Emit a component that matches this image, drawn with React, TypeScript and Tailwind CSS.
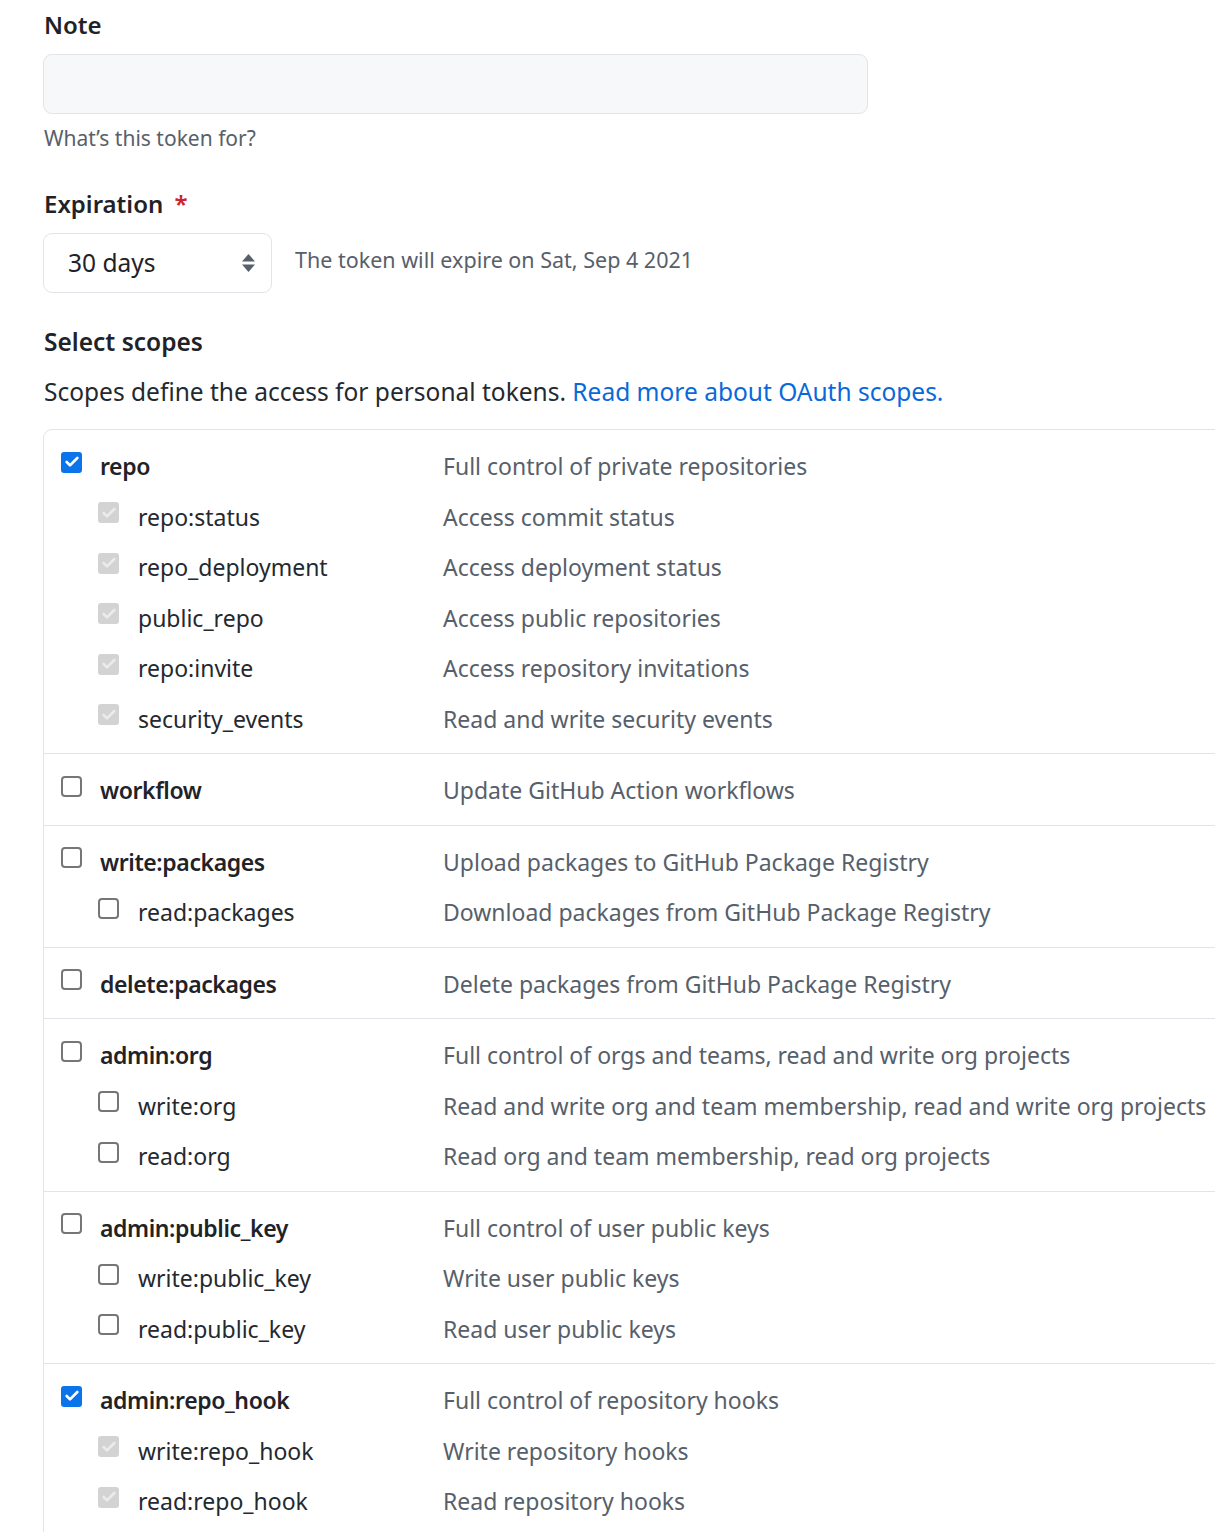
import { Check } from 'lucide-react';

type Scope = {
  name: string;
  desc: string;
  checked?: boolean;
  children?: { name: string; desc: string }[];
};

const scopes: Scope[] = [
  {
    name: 'repo',
    desc: 'Full control of private repositories',
    checked: true,
    children: [
      { name: 'repo:status', desc: 'Access commit status' },
      { name: 'repo_deployment', desc: 'Access deployment status' },
      { name: 'public_repo', desc: 'Access public repositories' },
      { name: 'repo:invite', desc: 'Access repository invitations' },
      { name: 'security_events', desc: 'Read and write security events' },
    ],
  },
  { name: 'workflow', desc: 'Update GitHub Action workflows' },
  {
    name: 'write:packages',
    desc: 'Upload packages to GitHub Package Registry',
    children: [{ name: 'read:packages', desc: 'Download packages from GitHub Package Registry' }],
  },
  { name: 'delete:packages', desc: 'Delete packages from GitHub Package Registry' },
  {
    name: 'admin:org',
    desc: 'Full control of orgs and teams, read and write org projects',
    children: [
      { name: 'write:org', desc: 'Read and write org and team membership, read and write org projects' },
      { name: 'read:org', desc: 'Read org and team membership, read org projects' },
    ],
  },
  {
    name: 'admin:public_key',
    desc: 'Full control of user public keys',
    children: [
      { name: 'write:public_key', desc: 'Write user public keys' },
      { name: 'read:public_key', desc: 'Read user public keys' },
    ],
  },
  {
    name: 'admin:repo_hook',
    desc: 'Full control of repository hooks',
    checked: true,
    children: [
      { name: 'write:repo_hook', desc: 'Write repository hooks' },
      { name: 'read:repo_hook', desc: 'Read repository hooks' },
    ],
  },
];

function Box({ state }: { state: 'on' | 'off' | 'disabled' }) {
  if (state === 'on') {
    return (
      <span className="flex h-[21px] w-[21px] items-center justify-center rounded-[3px] bg-[#0b74ea]">
        <Check className="h-[16px] w-[16px] text-white" strokeWidth={4} />
      </span>
    );
  }
  if (state === 'disabled') {
    return (
      <span className="flex h-[21px] w-[21px] items-center justify-center rounded-[3px] bg-[#d3d3d3]">
        <Check className="h-[16px] w-[16px] text-[#ebebeb]" strokeWidth={4} />
      </span>
    );
  }
  return <span className="block h-[21px] w-[21px] rounded-[4px] border-2 border-[#767676] bg-white" />;
}

function ScopeGroup({ scope }: { scope: Scope }) {
  return (
    <div className="border-t border-[#e1e4e8] pt-[11px] pb-[9px] first:border-t-0">
      <div className="flex h-[50.5px] items-center">
        <div className="flex w-[399px] items-center pl-[17px]">
          <span className="-mt-[8px]">
            <Box state={scope.checked ? 'on' : 'off'} />
          </span>
          <span className="ml-[18px] font-semibold tracking-[-0.4px] text-[#1f2328]">{scope.name}</span>
        </div>
        <span className="text-[#57606a]">{scope.desc}</span>
      </div>
      {scope.children?.map((c) => (
        <div key={c.name} className="flex h-[50.5px] items-center">
          <div className="flex w-[399px] items-center pl-[54px]">
            <span className="-mt-[8px]">
              <Box state={scope.checked ? 'disabled' : 'off'} />
            </span>
            <span className="ml-[19px] text-[#24292f]">{c.name}</span>
          </div>
          <span className="text-[#57606a]">{c.desc}</span>
        </div>
      ))}
    </div>
  );
}

export default function App() {
  return (
    <div
      className="h-[1532px] w-[1215px] overflow-hidden bg-white pl-[44px] pt-[10px] text-[#24292f]"
      style={{ fontFamily: '"Noto Sans", "Open Sans", sans-serif' }}
    >
      <div className="text-[24px] font-semibold leading-[30px] text-[#1f2328]">Note</div>
      <div className="mt-[14px] -ml-px h-[60px] w-[825px] rounded-[9px] border border-[#e1e4e8] bg-[#f6f8fa]" />
      <p className="mt-[10px] text-[21px] leading-[28px] text-[#57606a]">What’s this token for?</p>

      <div className="mt-[37px] text-[24px] font-semibold leading-[30px] text-[#1f2328]">
        Expiration <span className="ml-[5px] text-[#cf222e]">*</span>
      </div>
      <div className="mt-[14px] flex items-center">
        <div className="-ml-px flex h-[60px] w-[229px] items-center justify-between rounded-[9px] border border-[#e1e4e8] bg-white pl-[24px] pr-[15px]">
          <span className="text-[24.5px] text-[#1f2328]">30 days</span>
          <svg width="15" height="20" viewBox="0 0 15 20" className="text-[#57606a]">
            <path d="M7.5 1 L14 8.5 H1 Z" fill="currentColor" />
            <path d="M7.5 19 L14 11.5 H1 Z" fill="currentColor" />
          </svg>
        </div>
        <span className="ml-[23px] -mt-[5px] text-[21.5px] text-[#57606a]">The token will expire on Sat, Sep 4 2021</span>
      </div>

      <div className="mt-[33px] text-[24.5px] font-semibold leading-[32px] text-[#1f2328]">Select scopes</div>
      <p className="mt-[18px] text-[24.5px] leading-[32px]">
        Scopes define the access for personal tokens.{' '}
        <a className="text-[#0969da]">Read more about OAuth scopes.</a>
      </p>

      <div className="mt-[21px] -ml-px w-[1250px] rounded-tl-[9px] border border-[#e1e4e8] text-[23px]">
        {scopes.map((s) => (
          <ScopeGroup key={s.name} scope={s} />
        ))}
      </div>
    </div>
  );
}
